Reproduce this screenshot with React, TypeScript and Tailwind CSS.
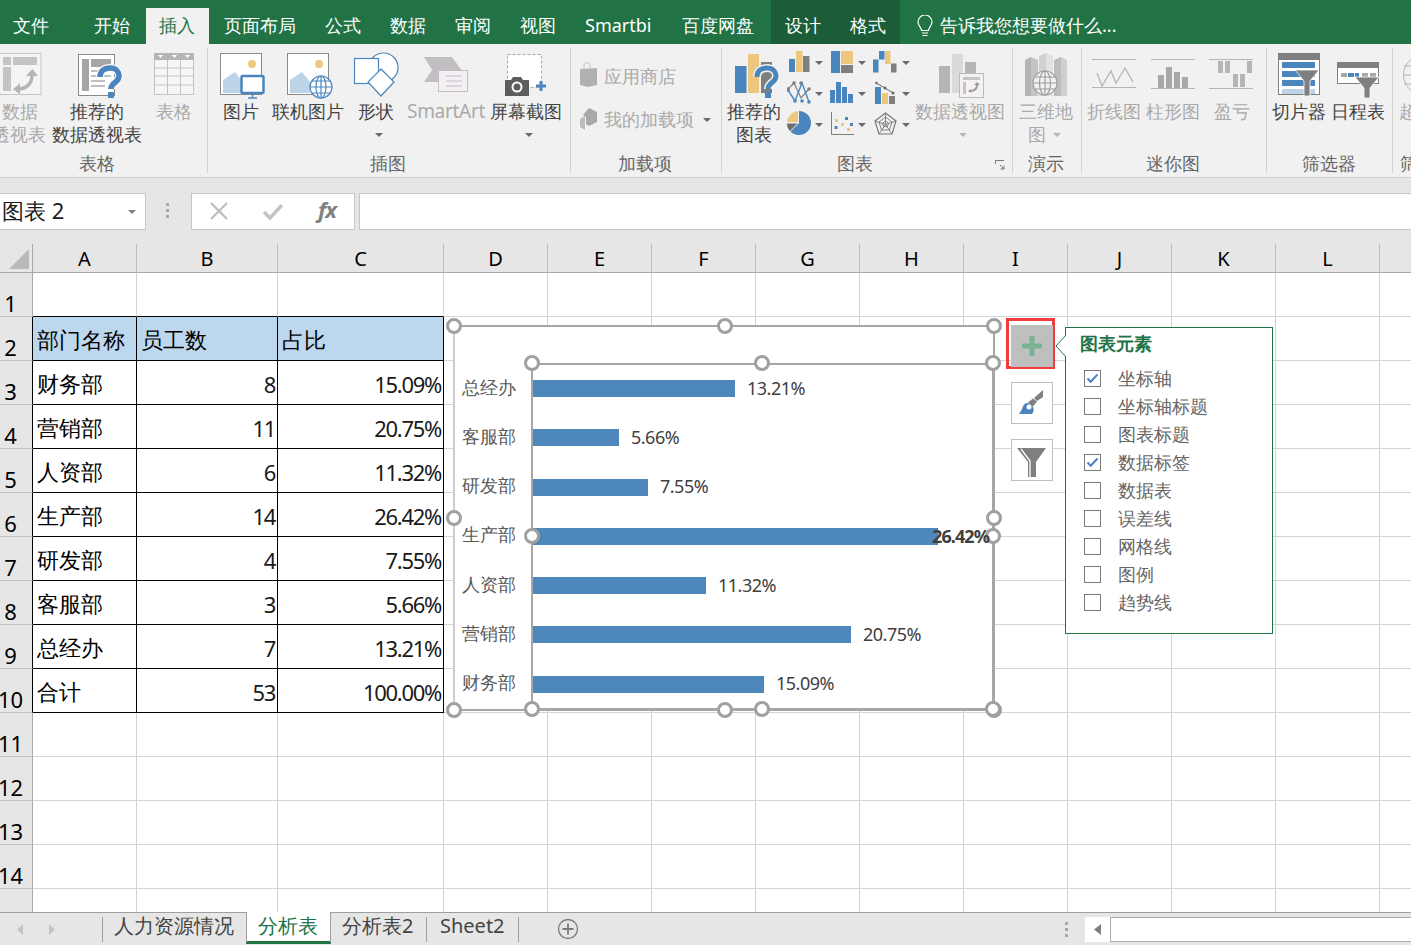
import React from "react";

const B = "#4a86bd", Y = "#edc77e", G = "#7f7f7f", L = "#c4c4c4";

function T({ c, children }: { c: string; children: React.ReactNode }) {
  return <span className={"absolute whitespace-nowrap leading-[24px] text-[18px] -mt-px " + c}>{children}</span>;
}

function Caret({ c, color = "#6a6a6a" }: { c: string; color?: string }) {
  return (
    <svg className={"absolute w-[8px] h-[4px] " + c} viewBox="0 0 8 4">
      <path d="M0 0h8L4 4z" fill={color} />
    </svg>
  );
}

function Handle({ c }: { c: string }) {
  return <div className={"absolute w-[16px] h-[16px] rounded-full bg-white border-[3px] border-[#a0a0a0] " + c} />;
}

function Check({ c, on }: { c: string; on?: boolean }) {
  return (
    <div className={"absolute w-[17px] h-[17px] border border-[#7a7a7a] bg-white " + c}>
      {on && (
        <svg className="w-[15px] h-[15px]" viewBox="0 0 15 15">
          <path d="M2.5 7.5l3.2 3.2L12.5 3.5" fill="none" stroke="#4a84c0" strokeWidth="2" />
        </svg>
      )}
    </div>
  );
}

const cols = ["A", "B", "C", "D", "E", "F", "G", "H", "I", "J", "K", "L", "M", ""];
const table: [string, string, string][] = [
  ["部门名称", "员工数", "占比"],
  ["财务部", "8", "15.09%"],
  ["营销部", "11", "20.75%"],
  ["人资部", "6", "11.32%"],
  ["生产部", "14", "26.42%"],
  ["研发部", "4", "7.55%"],
  ["客服部", "3", "5.66%"],
  ["总经办", "7", "13.21%"],
  ["合计", "53", "100.00%"],
];

function Sheet() {
  const rows = Array.from({ length: 15 }, (_, i) => i + 1);
  return (
    <div className="absolute left-0 top-[244px] w-[1411px] h-[668px] overflow-hidden">
      <div className="grid grid-cols-[33px_104px_141px_166px_repeat(10,104px)] grid-rows-[29px_repeat(15,44px)] w-[1500px] text-black">
        <div className="relative bg-[#e6e6e6] border-r border-b border-[#a8a8a8]">
          <svg className="absolute left-[9px] top-[5px] w-[20px] h-[20px]" viewBox="0 0 20 20">
            <path d="M20 0v20H0z" fill="#b9b9b9" />
          </svg>
        </div>
        {cols.slice(0, 13).map((h) => (
          <div key={h} className="flex items-end justify-center bg-[#e6e6e6] border-r border-b border-r-[#bdbdbd] border-b-[#a8a8a8] text-[20px] leading-[27px]">
            {h}
          </div>
        ))}
        {rows.map((r) => {
          const inTable = r >= 2 && r <= 10;
          const row = inTable ? table[r - 2] : null;
          return (
            <React.Fragment key={r}>
              <div className={"flex items-end justify-center pr-[11px] bg-[#e6e6e6] border-b border-b-[#c6c6c6] border-r text-[22px] leading-[25px] " + (inTable ? "border-r-black" : "border-r-[#a8a8a8]")}>
                {r}
              </div>
              {Array.from({ length: 13 }, (_, c) => {
                const cell = row && c < 3;
                const blackBottom = (r >= 1 && r <= 10 && c < 3);
                const text = cell ? row![c] : "";
                const num = cell && r > 2 && c > 0;
                return (
                  <div
                    key={c}
                    className={
                      "flex items-end border-r border-b overflow-visible whitespace-nowrap text-[22px] leading-[29px] " +
                      (cell ? "border-r-black " : "border-r-[#d4d4d4] ") +
                      (blackBottom ? "border-b-black " : "border-b-[#d4d4d4] ") +
                      (r === 2 && c < 3 ? "bg-[#bdd7ee] " : "bg-white ") +
                      (num ? "justify-end pb-[5px] pr-[2px] text-[21px] tracking-[-1.3px] text-[#1a1a1a]" : "pb-[6px] pl-[4px]")
                    }
                  >
                    {text}
                  </div>
                );
              })}
            </React.Fragment>
          );
        })}
      </div>
    </div>
  );
}

const bars = [
  { n: "总经办", top: "top-[380px]", w: "w-[202px]", v: "13.21%", l: "left-[747px]", ty: "top-[376px]", cy: "top-[376px]" },
  { n: "客服部", top: "top-[429px]", w: "w-[86px]", v: "5.66%", l: "left-[631px]", ty: "top-[425px]", cy: "top-[425px]" },
  { n: "研发部", top: "top-[479px]", w: "w-[115px]", v: "7.55%", l: "left-[660px]", ty: "top-[474px]", cy: "top-[474px]" },
  { n: "生产部", top: "top-[528px]", w: "w-[405px]", v: "26.42%", l: "left-[932px] font-bold tracking-[-0.9px]", ty: "top-[524px]", cy: "top-[523px]" },
  { n: "人资部", top: "top-[577px]", w: "w-[173px]", v: "11.32%", l: "left-[718px]", ty: "top-[573px]", cy: "top-[573px]" },
  { n: "营销部", top: "top-[626px]", w: "w-[318px]", v: "20.75%", l: "left-[863px]", ty: "top-[622px]", cy: "top-[622px]" },
  { n: "财务部", top: "top-[676px]", w: "w-[231px]", v: "15.09%", l: "left-[776px]", ty: "top-[671px]", cy: "top-[671px]" },
];

function Chart() {
  return (
    <>
      <div className="absolute left-[453px] top-[325px] w-[542px] h-[386px] bg-white border-[2px] border-[#a6a6a6] border-l-[#cdcdcd]" />
      <div className="absolute left-[531px] top-[363px] w-[463px] h-[347px] border-[2px] border-[#a6a6a6]" />
      {bars.map((b) => (
        <React.Fragment key={b.n}>
          <div className={"absolute left-[533px] h-[17px] bg-[#4e88bb] " + b.top + " " + b.w} />
          <T c={"left-[462px] text-[#595959] font-['Noto_Sans_CJK_SC',sans-serif] " + b.cy}>{b.n}</T>
        </React.Fragment>
      ))}
      <Handle c="left-[446px] top-[318px]" />
      <Handle c="left-[717px] top-[318px]" />
      <Handle c="left-[986px] top-[318px]" />
      <Handle c="left-[446px] top-[510px]" />
      <Handle c="left-[986px] top-[510px]" />
      <Handle c="left-[446px] top-[702px]" />
      <Handle c="left-[717px] top-[702px]" />
      <Handle c="left-[986px] top-[702px]" />
      <Handle c="left-[524px] top-[355px]" />
      <Handle c="left-[754px] top-[355px]" />
      <Handle c="left-[985px] top-[355px]" />
      <Handle c="left-[524px] top-[528px]" />
      <Handle c="left-[985px] top-[528px]" />
      <Handle c="left-[524px] top-[701px]" />
      <Handle c="left-[754px] top-[701px]" />
      <Handle c="left-[985px] top-[701px]" />
      {bars.map((b) => (
        <T key={b.v} c={"text-[15px] tracking-[-0.5px] text-[#404040] translate-y-[1px] " + b.ty + " " + b.l}>{b.v}</T>
      ))}
    </>
  );
}

function ChartTools() {
  const items: [string, string, boolean][] = [
    ["坐标轴", "top-[367px]", true],
    ["坐标轴标题", "top-[395px]", false],
    ["图表标题", "top-[423px]", false],
    ["数据标签", "top-[451px]", true],
    ["数据表", "top-[479px]", false],
    ["误差线", "top-[507px]", false],
    ["网格线", "top-[535px]", false],
    ["图例", "top-[563px]", false],
    ["趋势线", "top-[591px]", false],
  ];
  const boxes = ["top-[370px]", "top-[398px]", "top-[426px]", "top-[454px]", "top-[482px]", "top-[510px]", "top-[538px]", "top-[566px]", "top-[594px]"];
  return (
    <>
      <div className="absolute left-[1006px] top-[318px] w-[49px] h-[51px] border-[3px] border-[#f23c3c]" />
      <div className="absolute left-[1011px] top-[325px] w-[42px] h-[42px] bg-[#bfbfbf] flex items-center justify-center">
        <svg className="w-[20px] h-[20px]" viewBox="0 0 20 20">
          <path d="M7.5 0h5v7.5H20v5h-7.500V20h-5v-7.500H0v-5h7.500z" fill="#7ab394" />
        </svg>
      </div>
      <div className="absolute left-[1011px] top-[382px] w-[42px] h-[42px] bg-white border border-[#bfbfbf]">
        <svg className="w-[40px] h-[40px]" viewBox="0 0 40 40">
          <path d="M31 7L22 15l3 3 6-4z" fill="#7f7f7f" />
          <path d="M21 15.500l-5 4 5 4 4-5z" fill="#7f7f7f" />
          <path d="M15 20c-4 1-4 4-5 6s-3 5-3 5h13c2-2 2-5 1-7-1-2-4-4-6-4z" fill="#4a84c0" />
          <circle cx="17" cy="24" r="2.500" fill="#fff" />
        </svg>
      </div>
      <div className="absolute left-[1011px] top-[439px] w-[42px] h-[42px] bg-white border border-[#bfbfbf]">
        <svg className="w-[40px] h-[40px]" viewBox="0 0 40 40">
          <path d="M5 8h29L24 22v15h-8V22z" fill="#7f7f7f" />
          <path d="M9 9l9 12v16" fill="none" stroke="#fff" strokeWidth="1.300" />
        </svg>
      </div>
      <div className="absolute left-[1065px] top-[327px] w-[208px] h-[307px] bg-white border border-[#217346]" />
      <svg className="absolute left-[1055px] top-[335px] w-[12px] h-[24px]" viewBox="0 0 12 24">
        <path d="M11 0L1 11l10 11" fill="#fff" stroke="#217346" strokeWidth="1" />
      </svg>
      <T c="left-[1080px] top-[332px] font-bold text-[#217346]">图表元素</T>
      {items.map(([label, top, on], i) => (
        <React.Fragment key={label}>
          <Check c={"left-[1084px] " + boxes[i]} on={on} />
          <T c={"left-[1118px] text-[#666666] " + top}>{label}</T>
        </React.Fragment>
      ))}
    </>
  );
}

const QMARK = "M22 24c0-6 4-9 10-9 6 0 9 4 9 8 0 7-8 6-8 13";

function Ribbon() {
  const chartIcons = (
    <>
      {/* row 1 */}
      <svg className="absolute left-[789px] top-[51px] w-[21px] h-[21px]" viewBox="0 0 21 21">
        <rect x="0" y="8" width="6" height="13" fill={B} /><rect x="7" y="0" width="6.500" height="21" fill={Y} /><rect x="14" y="5" width="6.500" height="16" fill={G} />
      </svg>
      <svg className="absolute left-[831px] top-[51px] w-[23px] h-[22px]" viewBox="0 0 23 22">
        <rect x="0" y="0" width="9" height="22" fill={B} /><rect x="10" y="0" width="12" height="13" fill={Y} /><rect x="10" y="14" width="12" height="8" fill={G} />
      </svg>
      <svg className="absolute left-[873px] top-[51px] w-[24px] h-[22px]" viewBox="0 0 24 22">
        <rect x="0" y="8.500" width="5.500" height="13" fill={B} /><rect x="6" y="0" width="5.500" height="8.500" fill={B} /><rect x="12" y="0" width="5.500" height="13" fill={Y} /><rect x="18" y="12.500" width="5.500" height="9" fill={G} />
      </svg>
      {/* row 2 */}
      <svg className="absolute left-[787px] top-[81px] w-[24px] h-[24px]" viewBox="0 0 24 24" fill="none">
        <path d="M1 8l6-6 7 15 8-9" stroke={G} strokeWidth="1.200" />
        <path d="M1 9l7 11 7-18 7 19" stroke={B} strokeWidth="1.400" />
        {[[1, 9], [8, 20], [15, 20], [22, 21]].map(([x, y], i) => <circle key={i} cx={x} cy={y} r="1.800" fill={B} />)}
        {[[7, 2], [14, 2], [22, 8], [1, 8]].map(([x, y], i) => <circle key={i} cx={x} cy={y} r="1.800" fill={G} />)}
      </svg>
      <svg className="absolute left-[830px] top-[82px] w-[24px] h-[22px]" viewBox="0 0 24 22">
        <rect x="0" y="8" width="5" height="13" fill={B} /><rect x="6" y="0" width="5" height="21" fill={B} /><rect x="12" y="5" width="5" height="16" fill={B} /><rect x="18" y="12" width="5" height="9" fill={B} />
      </svg>
      <svg className="absolute left-[875px] top-[80px] w-[22px] h-[24px]" viewBox="0 0 22 24">
        <rect x="0" y="7" width="6" height="17" fill={B} /><rect x="7" y="13" width="6" height="11" fill={Y} /><rect x="14" y="16" width="6" height="8" fill={G} />
        <path d="M1 3l9 5 8 5" fill="none" stroke="#666" strokeWidth="1" />
        <circle cx="1.500" cy="3" r="1.300" fill="#666" /><circle cx="10" cy="8" r="1.500" fill="#666" /><circle cx="18" cy="13" r="1.500" fill="#666" />
      </svg>
      {/* row 3 */}
      <svg className="absolute left-[787px] top-[111px] w-[24px] h-[24px]" viewBox="0 0 24 24">
        <path d="M12 12V0a12 12 0 0 1 0 24c-4 0-6.500-1.500-8.500-3.500z" fill={B} />
        <path d="M11 11V0A12 12 0 0 0 0 11z" fill={Y} />
        <path d="M10.500 12.500H0c0 3 1 5.500 3 7.500z" fill="#6f6f6f" />
      </svg>
      <svg className="absolute left-[831px] top-[112px] w-[23px] h-[23px]" viewBox="0 0 23 23">
        <path d="M.5 0v22.500H23" fill="none" stroke="#7f7f7f" />
        <rect x="4" y="7" width="3" height="3" fill={Y} /><rect x="14" y="5" width="3" height="3" fill={B} /><rect x="3.500" y="14" width="3" height="3" fill={B} /><rect x="10" y="11" width="3" height="3" fill={Y} /><rect x="19" y="11" width="3" height="3" fill={B} /><rect x="16" y="16" width="3" height="3" fill={Y} />
      </svg>
      <svg className="absolute left-[874px] top-[112px] w-[23px] h-[23px]" viewBox="0 0 23 23" fill="none" stroke="#7a7a7a" strokeWidth="0.900">
        <path d="M11.500 1l10.500 8-4 13H5L1 9z" strokeWidth="1.200" /><path d="M11.500 5l6.500 5-2.500 8h-8L5 10z" /><path d="M11.500 9l3 2.200-1.100 3.500H9.600l-1.100-3.500z" /><path d="M11.500 1v11.500M1 9l10.500 3.500L22 9M5 22l6.500-9.500L18 22" />
      </svg>
      <Caret c="left-[815px] top-[61px]" /><Caret c="left-[858px] top-[61px]" /><Caret c="left-[902px] top-[61px]" />
      <Caret c="left-[815px] top-[92px]" /><Caret c="left-[858px] top-[92px]" /><Caret c="left-[902px] top-[92px]" />
      <Caret c="left-[815px] top-[123px]" /><Caret c="left-[858px] top-[123px]" /><Caret c="left-[902px] top-[123px]" />
    </>
  );

  return (
    <>
      <div className="absolute left-0 top-0 w-[1411px] h-[44px] bg-[#217346]" />
      <div className="absolute left-[771px] top-0 w-[129px] h-[44px] bg-[#1c5c38]" />
      <div className="absolute left-0 top-[44px] w-[1411px] h-[134px] bg-[#f1f1f1] border-b border-[#d2d2d2]" />
      <div className="absolute left-[146px] top-[8px] w-[63px] h-[36px] bg-[#f1f1f1]" />

      <T c="left-[13px] top-[14px] text-white">文件</T>
      <T c="left-[94px] top-[14px] text-white">开始</T>
      <T c="left-[159px] top-[14px] text-[#217346]">插入</T>
      <T c="left-[224px] top-[14px] text-white">页面布局</T>
      <T c="left-[325px] top-[14px] text-white">公式</T>
      <T c="left-[390px] top-[14px] text-white">数据</T>
      <T c="left-[455px] top-[14px] text-white">审阅</T>
      <T c="left-[520px] top-[14px] text-white">视图</T>
      <T c="left-[585px] top-[14px] text-white">Smartbi</T>
      <T c="left-[682px] top-[14px] text-white">百度网盘</T>
      <T c="left-[785px] top-[14px] text-white">设计</T>
      <T c="left-[850px] top-[14px] text-white">格式</T>
      <svg className="absolute left-[915px] top-[15px] w-[20px] h-[23px]" viewBox="0 0 20 23" fill="none" stroke="#fff" strokeWidth="1.200">
        <path d="M6.500 15.500c0-3-3.500-4.500-3.500-8.500a7 7 0 0 1 14 0c0 4-3.500 5.500-3.500 8.500z" /><path d="M7 18h6M7.500 20.500h5" />
      </svg>
      <T c="left-[940px] top-[14px] text-white">告诉我您想要做什么...</T>

      {/* separators */}
      {["left-[207px]", "left-[570px]", "left-[721px]", "left-[1012px]", "left-[1081px]", "left-[1266px]", "left-[1392px]"].map((l) => (
        <div key={l} className={"absolute top-[48px] w-px h-[125px] bg-[#d2d2d2] " + l} />
      ))}

      {/* tables */}
      <svg className="absolute left-0 top-[53px] w-[42px] h-[43px]" viewBox="0 0 42 43">
        <rect x="-3" y=".5" width="44" height="41" fill="#f6f3f6" stroke={L} />
        <rect x="3" y="4" width="8" height="8" fill={L} /><rect x="13" y="4" width="24" height="8" fill={L} /><rect x="3" y="14" width="8" height="24" fill={L} />
        <path d="M18 36c8 0 14-5 14-14" fill="none" stroke="#b5b5b5" strokeWidth="3.500" /><path d="M26 23l6.500-7 5.500 7zM20 30.500v11l-7-5.500z" fill="#b5b5b5" />
      </svg>
      <svg className="absolute left-[78px] top-[53px] w-[46px] h-[46px]" viewBox="0 0 46 46">
        <rect x=".5" y="1.500" width="36" height="41" fill="#fff" stroke="#8a8a8a" />
        <rect x="4" y="6" width="7" height="32" fill="#a6a6a6" /><rect x="13" y="6" width="20" height="8" fill="#a6a6a6" />
        <path d="M13 18h20M13 23h20M13 28h14M13 33h14" stroke="#c0c0c0" strokeWidth="2" />
        <path d={QMARK} fill="none" stroke="#f8f8f8" strokeWidth="8" />
        <path d={QMARK} fill="none" stroke={B} strokeWidth="5.500" /><rect x="30" y="39" width="6" height="6" fill={B} />
      </svg>
      <svg className="absolute left-[154px] top-[53px] w-[41px] h-[43px]" viewBox="0 0 41 43">
        <rect x=".5" y=".5" width="39" height="41" fill="#f8f5f8" stroke={L} />
        <rect x="0" y="0" width="40" height="7" fill="#b5b5b5" />
        <path d="M4 2h5l-2.500 3zM18 2h5l-2.500 3zM31 2h5l-2.500 3z" fill="#fff" />
        <path d="M0 15h40M0 23h40M0 32h40M13.500 7v35M26.500 7v35" stroke={L} />
      </svg>
      <T c="left-[2px] top-[100px] text-[#aaaaaa]">数据</T>
      <T c="left-[-8px] top-[123px] text-[#aaaaaa]">透视表</T>
      <T c="left-[70px] top-[100px] text-[#444444]">推荐的</T>
      <T c="left-[52px] top-[123px] text-[#444444]">数据透视表</T>
      <T c="left-[156px] top-[100px] text-[#aaaaaa]">表格</T>
      <T c="left-[79px] top-[152px] text-[#666666]">表格</T>

      {/* illustrations */}
      <svg className="absolute left-[220px] top-[53px] w-[46px] h-[46px]" viewBox="0 0 46 46">
        <rect x=".5" y=".5" width="41" height="41" fill="#fff" stroke="#8a8a8a" />
        <circle cx="32" cy="11" r="4" fill={Y} /><path d="M3 40V27l12-8 8 10v11z" fill="#bdd3e8" />
        <rect x="21.500" y="23" width="22" height="17" rx="1" fill="#fff" stroke={B} strokeWidth="2.500" />
        <path d="M32.500 40v4M28 45h9" stroke={B} strokeWidth="1.500" />
      </svg>
      <svg className="absolute left-[287px] top-[53px] w-[46px] h-[46px]" viewBox="0 0 46 46">
        <rect x=".5" y=".5" width="41" height="41" fill="#fff" stroke="#8a8a8a" />
        <circle cx="32" cy="11" r="4" fill={Y} /><path d="M3 40V27l12-8 8 10v11z" fill="#bdd3e8" />
        <g fill="#fff" stroke={B} strokeWidth="1.200"><circle cx="34" cy="34" r="11" /><ellipse cx="34" cy="34" rx="5" ry="11" /><path d="M23 34h22M25 28h18M25 40h18M34 23v22" /></g>
      </svg>
      <svg className="absolute left-[353px] top-[51px] w-[46px] h-[46px]" viewBox="0 0 46 46" fill="#fff" stroke={B} strokeWidth="1.200">
        <circle cx="30.500" cy="16.500" r="14.500" />
        <rect x="1.500" y="7.500" width="24" height="25" />
        <path d="M28 18l13 13-13 14-13-14z" />
      </svg>
      <svg className="absolute left-[424px] top-[56px] w-[46px] h-[38px]" viewBox="0 0 46 38">
        <path d="M0 1h28l10 14-10 11H0l8-12z" fill="#c1bfc1" />
        <rect x="14.500" y="14.500" width="29" height="21" fill="#f3eff3" stroke="#c4bcc4" />
        <path d="M22 20h16M22 25h16M22 30h16" stroke="#c4bcc4" />
      </svg>
      <svg className="absolute left-[504px] top-[54px] w-[44px] h-[44px]" viewBox="0 0 44 44">
        <rect x="3.500" y=".5" width="34" height="33" fill="#fff" stroke="#a8a8a8" strokeDasharray="3 2" />
        <path d="M1 26h6l2-3h8l2 3h6v16H1z" fill="#5d5d5d" /><circle cx="13" cy="33" r="5.500" fill="#fff" /><circle cx="13" cy="33" r="3.500" fill="#5d5d5d" />
        <path d="M32 32h10M37 27v10" stroke={B} strokeWidth="3" />
      </svg>
      <T c="left-[223px] top-[100px] text-[#444444]">图片</T>
      <T c="left-[272px] top-[100px] text-[#444444]">联机图片</T>
      <T c="left-[358px] top-[100px] text-[#444444]">形状</T>
      <T c="left-[407px] top-[100px] text-[#aaaaaa] font-['Noto_Sans',sans-serif] text-[19px] tracking-[-0.3px]">SmartArt</T>
      <T c="left-[490px] top-[100px] text-[#444444]">屏幕截图</T>
      <Caret c="left-[375px] top-[133px]" /><Caret c="left-[525px] top-[133px]" />
      <T c="left-[370px] top-[152px] text-[#666666]">插图</T>

      {/* add-ins */}
      <svg className="absolute left-[579px] top-[62px] w-[19px] h-[26px]" viewBox="0 0 19 26">
        <path d="M1 7l17-1v17l-9 2-8-2z" fill="#b0b0b0" /><path d="M5 7V3c0-3 6-3 6 0v3" fill="none" stroke="#c4c4c4" />
      </svg>
      <svg className="absolute left-[579px] top-[108px] w-[19px] h-[22px]" viewBox="0 0 19 22">
        <path d="M10 0l8 4v10l-8 4-3-2V9L4 7z" fill="#a8a8a8" /><path d="M1 11l5-3v14l-5-3z" fill="#bcbcbc" />
      </svg>
      <T c="left-[604px] top-[65px] text-[#aaaaaa]">应用商店</T>
      <T c="left-[604px] top-[108px] text-[#aaaaaa]">我的加载项</T>
      <Caret c="left-[703px] top-[118px]" />
      <T c="left-[618px] top-[152px] text-[#666666]">加载项</T>

      {/* charts */}
      <svg className="absolute left-[735px] top-[53px] w-[44px] h-[46px]" viewBox="0 0 44 46">
        <rect x="0" y="13" width="11.500" height="27" fill={B} /><rect x="13" y="1" width="11" height="39" fill={Y} /><rect x="26" y="9" width="11" height="31" fill={G} />
        <path d={QMARK} fill="none" stroke="#f1f1f1" strokeWidth="8" />
        <path d={QMARK} fill="none" stroke={B} strokeWidth="5" /><rect x="30" y="39" width="6" height="6" fill={B} />
      </svg>
      <T c="left-[727px] top-[100px] text-[#444444]">推荐的</T>
      <T c="left-[736px] top-[123px] text-[#444444]">图表</T>
      {chartIcons}
      <svg className="absolute left-[938px] top-[53px] w-[47px] h-[46px]" viewBox="0 0 47 46">
        <rect x="1" y="13" width="11" height="27" fill="#b5b5b5" /><rect x="14" y="1" width="11" height="39" fill="#dcd9dc" /><rect x="27" y="9" width="11" height="20" fill="#b5b5b5" />
        <rect x="21.500" y="20.500" width="24" height="24" fill="#f4f0f4" stroke="#bbbbbb" />
        <rect x="25" y="24" width="17" height="3" fill="#c4c4c4" /><rect x="25" y="29" width="3" height="12" fill="#c4c4c4" />
        <path d="M32 38c4 0 7-2 7-6" fill="none" stroke="#9a9a9a" strokeWidth="2" /><path d="M36 32l3-3 3 3zM33 36v4l-3-2z" fill="#9a9a9a" />
      </svg>
      <T c="left-[915px] top-[100px] text-[#aaaaaa]">数据透视图</T>
      <Caret c="left-[959px] top-[133px]" color="#b5b5b5" />
      <T c="left-[837px] top-[152px] text-[#666666]">图表</T>
      <svg className="absolute left-[995px] top-[160px] w-[10px] h-[10px]" viewBox="0 0 10 10" fill="none" stroke="#777">
        <path d="M.5 4V.5H9M5 5l4 4M9 5.500V9H5.500" />
      </svg>

      {/* tours */}
      <svg className="absolute left-[1025px] top-[53px] w-[42px] h-[43px]" viewBox="0 0 42 43">
        <path d="M0 7l6-3v39H0z" fill="#b5b5b5" /><path d="M6 4l7 3v36H6z" fill="#c4c4c4" /><path d="M14 3l7-3v43h-7z" fill="#d2d2d2" /><path d="M21 0l7 3v40h-7z" fill="#e2e2e2" /><path d="M29 7l7-3v39h-7z" fill="#bdbdbd" /><path d="M36 4l6 3v36h-6z" fill="#cfcfcf" />
        <g fill="#f1f1f1" stroke="#9a9a9a" strokeWidth="1.100"><circle cx="20" cy="30" r="12" /><ellipse cx="20" cy="30" rx="5.500" ry="12" /><path d="M8 30h24M10 24h20M10 36h20M20 18v24" /></g>
      </svg>
      <T c="left-[1019px] top-[100px] text-[#aaaaaa]">三维地</T>
      <T c="left-[1028px] top-[123px] text-[#aaaaaa]">图</T>
      <Caret c="left-[1053px] top-[133px]" color="#b5b5b5" />
      <T c="left-[1028px] top-[152px] text-[#666666]">演示</T>

      {/* sparklines */}
      <svg className="absolute left-[1091px] top-[58px] w-[46px] h-[32px]" viewBox="0 0 46 32" fill="none" stroke="#b5b5b5">
        <path d="M1 1.500h44M1 29.500h44" /><path d="M6 15l5 13 9-15 5 12 9-15 8 14" strokeWidth="1.300" />
      </svg>
      <svg className="absolute left-[1151px] top-[59px] w-[44px] h-[30px]" viewBox="0 0 44 30" fill="none">
        <path d="M0 .5h44M0 29.500h44" stroke="#b5b5b5" />
        <g fill="#a8a8a8"><rect x="7" y="16" width="6" height="13" /><rect x="15" y="8" width="6" height="21" /><rect x="23" y="13" width="6" height="16" /><rect x="31" y="18" width="6" height="11" /></g>
      </svg>
      <svg className="absolute left-[1209px] top-[59px] w-[44px] h-[30px]" viewBox="0 0 44 30" fill="none">
        <path d="M0 .5h44M0 29.500h44" stroke="#b5b5b5" />
        <g fill="#b5b5b5"><rect x="9" y="2" width="5" height="12" /><rect x="16" y="2" width="5" height="12" /><rect x="24" y="15" width="5" height="13" /><rect x="31" y="15" width="5" height="13" /><rect x="38" y="2" width="5" height="12" /></g>
      </svg>
      <T c="left-[1087px] top-[100px] text-[#aaaaaa]">折线图</T>
      <T c="left-[1146px] top-[100px] text-[#aaaaaa]">柱形图</T>
      <T c="left-[1214px] top-[100px] text-[#aaaaaa]">盈亏</T>
      <T c="left-[1146px] top-[152px] text-[#666666]">迷你图</T>

      {/* filters */}
      <svg className="absolute left-[1278px] top-[53px] w-[43px] h-[43px]" viewBox="0 0 43 43">
        <rect x=".5" y=".5" width="41" height="41" fill="#fff" stroke="#7f7f7f" />
        <rect x="0" y="0" width="42" height="7" fill="#7f7f7f" />
        <rect x="4" y="9" width="33" height="6" fill={B} /><rect x="4" y="18" width="33" height="6" fill={B} /><rect x="4" y="27" width="33" height="6" fill={B} /><rect x="4" y="36" width="33" height="5" fill="#bdd3e8" />
        <path d="M17 17h24L32 28v15h-6V28z" fill="#7f7f7f" stroke="#fff" strokeWidth=".8" />
      </svg>
      <svg className="absolute left-[1337px] top-[62px] w-[43px] h-[36px]" viewBox="0 0 43 36">
        <rect x=".5" y=".5" width="41" height="21" fill="#fff" stroke="#7f7f7f" />
        <rect x="0" y="0" width="42" height="6" fill="#7f7f7f" />
        <rect x="4" y="11" width="6" height="4" fill="#a6a6a6" /><rect x="11" y="11" width="6" height="4" fill={B} /><rect x="18" y="11" width="4" height="4" fill={B} /><rect x="25" y="11" width="6" height="4" fill="#a6a6a6" /><rect x="33" y="11" width="6" height="4" fill="#a6a6a6" />
        <path d="M18 15h24L33 26v10h-6V26z" fill="#7f7f7f" stroke="#fff" strokeWidth=".8" />
      </svg>
      <T c="left-[1272px] top-[100px] text-[#444444]">切片器</T>
      <T c="left-[1331px] top-[100px] text-[#444444]">日程表</T>
      <T c="left-[1302px] top-[152px] text-[#666666]">筛选器</T>
      <svg className="absolute left-[1403px] top-[54px] w-[8px] h-[42px]" viewBox="0 0 8 42" fill="none" stroke="#b5b5b5">
        <circle cx="20" cy="21" r="19.500" /><ellipse cx="20" cy="21" rx="10" ry="19.500" /><path d="M0 21h8M1 12h7M1 30h7" />
      </svg>
      <T c="left-[1399px] top-[100px] text-[#aaaaaa]">超</T>
      <T c="left-[1400px] top-[152px] text-[#666666]">筛</T>
    </>
  );
}

function FormulaBar() {
  return (
    <>
      <div className="absolute left-0 top-[178px] w-[1411px] h-[66px] bg-[#e6e6e6]" />
      <div className="absolute left-[-1px] top-[193px] w-[147px] h-[37px] bg-white border border-[#c6c6c6]" />
      <T c="left-[2px] top-[199px] text-[22px] text-[#1a1a1a]">图表 2</T>
      <Caret c="left-[128px] top-[210px]" color="#808080" />
      <div className="absolute left-[166px] top-[203px] w-[3px] h-[3px] bg-[#a8a8a8]" />
      <div className="absolute left-[166px] top-[209px] w-[3px] h-[3px] bg-[#a8a8a8]" />
      <div className="absolute left-[166px] top-[215px] w-[3px] h-[3px] bg-[#a8a8a8]" />
      <div className="absolute left-[191px] top-[193px] w-[164px] h-[37px] bg-white border border-[#c6c6c6]" />
      <svg className="absolute left-[209px] top-[202px] w-[20px] h-[18px]" viewBox="0 0 20 18" fill="none" stroke="#bdbdbd" strokeWidth="2.200">
        <path d="M2 1l16 16M18 1L2 17" />
      </svg>
      <svg className="absolute left-[263px] top-[203px] w-[21px] h-[18px]" viewBox="0 0 21 18" fill="none" stroke="#c4c4c4" strokeWidth="3.500">
        <path d="M1 9l6 6L19 2" />
      </svg>
      <T c="left-[318px] top-[198px] text-[22px] italic font-bold text-[#808080] font-['Liberation_Serif',serif] tracking-[-1px]">fx</T>
      <div className="absolute left-[359px] top-[193px] w-[1053px] h-[37px] bg-white border border-[#c6c6c6]" />
    </>
  );
}

function Sep({ c }: { c: string }) {
  return <div className={"absolute top-[917px] w-px h-[25px] bg-[#9f9f9f] " + c} />;
}

function Tabs() {
  return (
    <>
      <div className="absolute left-0 top-[912px] w-[1411px] h-[33px] bg-[#e6e6e6] border-t border-[#9f9f9f]" />
      <Sep c="left-[102px]" />
      <svg className="absolute left-[17px] top-[924px] w-[6px] h-[11px]" viewBox="0 0 6 11"><path d="M6 0v11L0 5.500z" fill="#c4c4c4" /></svg>
      <svg className="absolute left-[49px] top-[924px] w-[6px] h-[11px]" viewBox="0 0 6 11"><path d="M0 0v11l6-5.500z" fill="#c4c4c4" /></svg>
      <T c="left-[114px] top-[915px] text-[20px] text-[#444444]">人力资源情况</T>
      <div className="absolute left-[246px] top-[912px] w-[85px] h-[32px] bg-white border-x border-[#9f9f9f] border-b-[3px] border-b-[#217346]" />
      <T c="left-[258px] top-[915px] text-[20px] text-[#217346]">分析表</T>
      <T c="left-[342px] top-[915px] text-[20px] text-[#444444]">分析表2</T>
      <Sep c="left-[426px]" />
      <T c="left-[440px] top-[915px] text-[20px] text-[#444444] font-['Noto_Sans',sans-serif]">Sheet2</T>
      <Sep c="left-[518px]" />
      <svg className="absolute left-[557px] top-[918px] w-[22px] h-[22px]" viewBox="0 0 22 22" fill="none" stroke="#7a7a7a" strokeWidth="1.300">
        <circle cx="11" cy="11" r="9.500" /><path d="M11 5.500v11M5.500 11h11" strokeWidth="1.800" />
      </svg>
      <div className="absolute left-[1065px] top-[922px] w-[3px] h-[3px] bg-[#a8a8a8]" />
      <div className="absolute left-[1065px] top-[928px] w-[3px] h-[3px] bg-[#a8a8a8]" />
      <div className="absolute left-[1065px] top-[934px] w-[3px] h-[3px] bg-[#a8a8a8]" />
      <div className="absolute left-[1085px] top-[917px] w-[25px] h-[25px] bg-white" />
      <svg className="absolute left-[1094px] top-[924px] w-[7px] h-[11px]" viewBox="0 0 7 11"><path d="M7 0v11L0 5.500z" fill="#7f7f7f" /></svg>
      <div className="absolute left-[1110px] top-[917px] w-[302px] h-[25px] bg-white border border-[#ababab]" />
    </>
  );
}

export default function App() {
  return (
    <div className="relative w-[1411px] h-[945px] overflow-hidden bg-white font-['Lato','Noto_Sans_CJK_SC',sans-serif]">
      <Ribbon />
      <FormulaBar />
      <Sheet />
      <Chart />
      <ChartTools />
      <Tabs />
    </div>
  );
}
